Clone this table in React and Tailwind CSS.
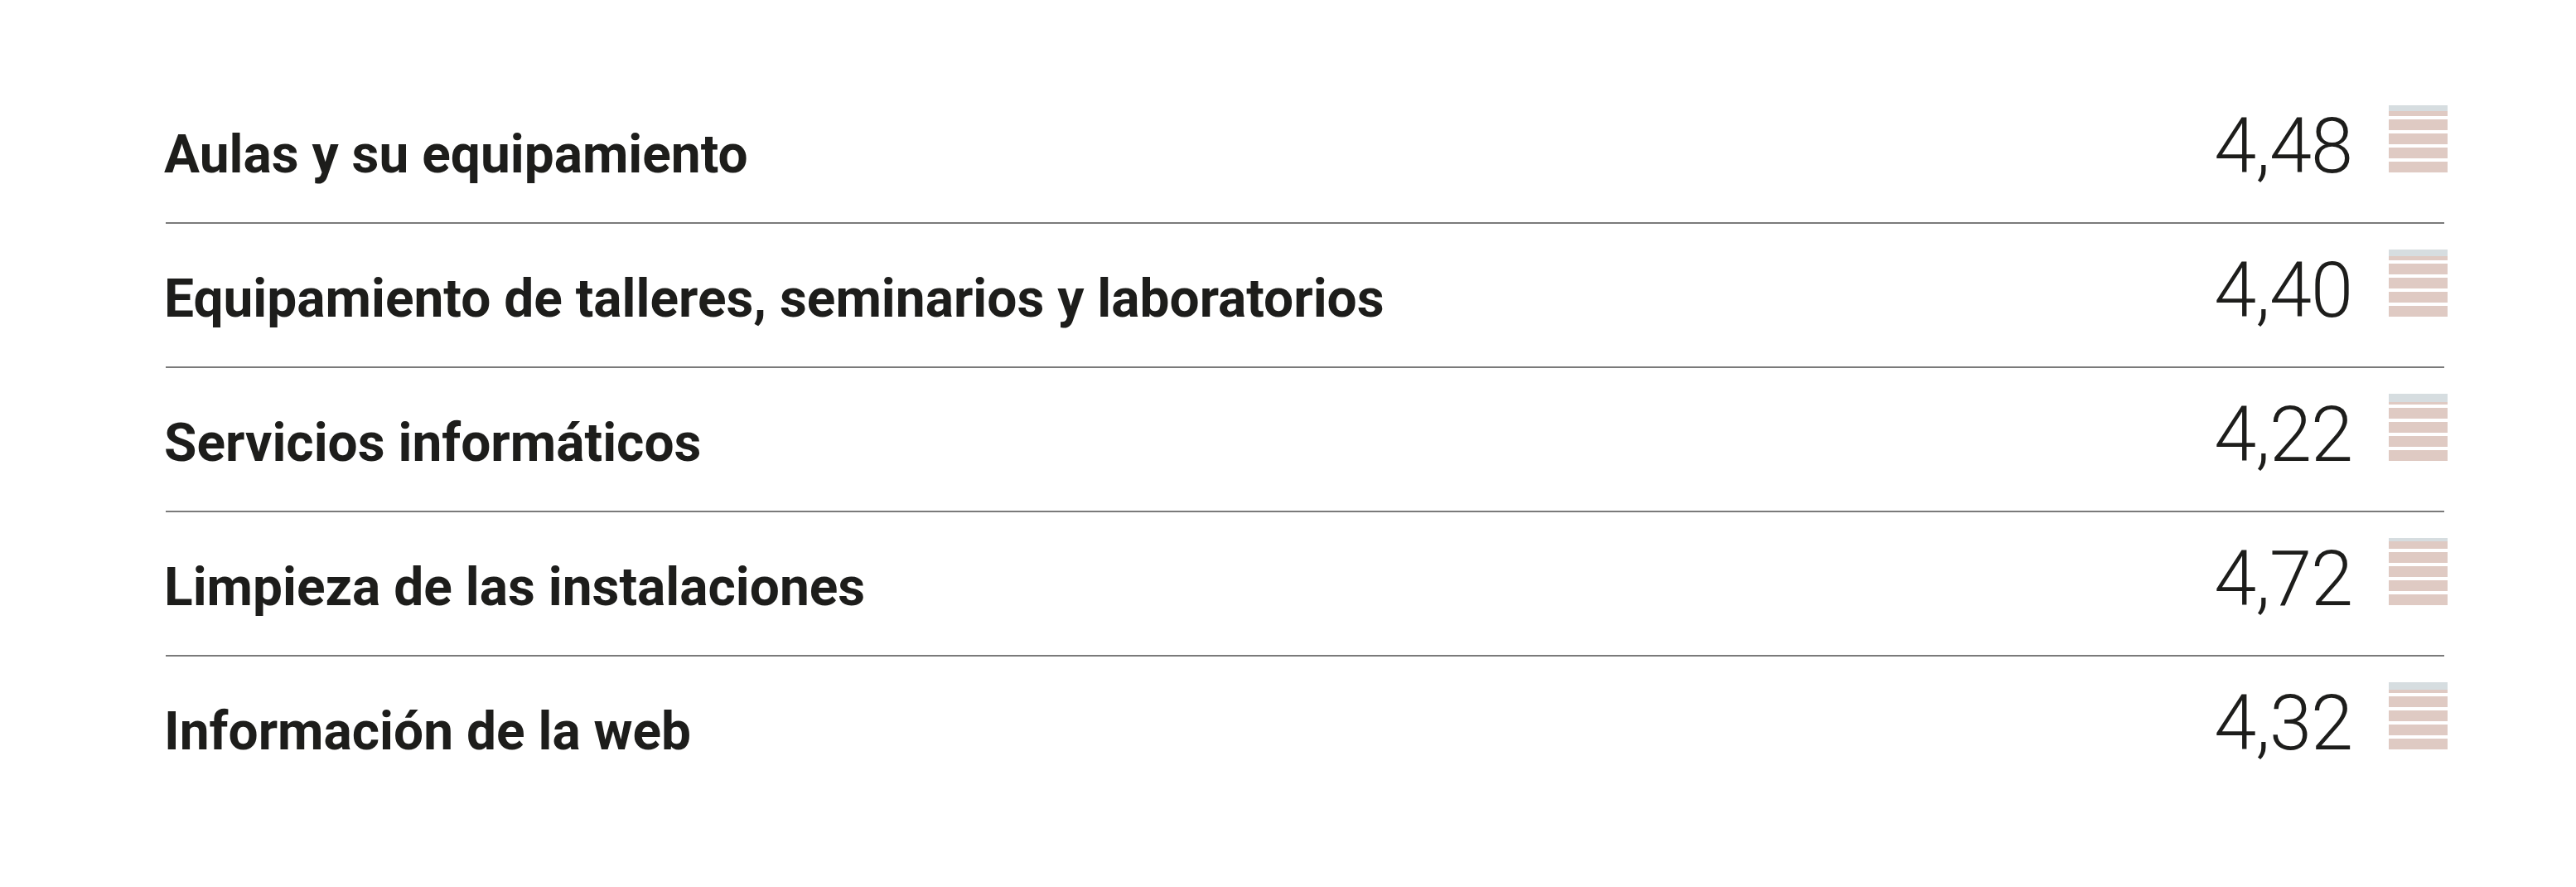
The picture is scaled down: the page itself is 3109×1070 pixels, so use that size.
const ROWS = [
  { label: 'Aulas y su equipamiento', value: 4.48 },
  { label: 'Equipamiento de talleres, seminarios y laboratorios', value: 4.4 },
  { label: 'Servicios informáticos', value: 4.22 },
  { label: 'Limpieza de las instalaciones', value: 4.72 },
  { label: 'Información de la web', value: 4.32 },
];

// top bar shows the decimal part, the four below are always full
function Bars({ value }) {
  const part = Math.max(0, Math.min(1, value - 4));
  return (
    <div className="ml-[44px] w-[71px] space-y-[4px]">
      <div className="relative h-[13px] bg-[#d6dde0]">
        <div className="absolute inset-x-0 bottom-0 bg-[#dfcac3]" style={{ height: `${part * 13}px` }} />
      </div>
      {[0, 1, 2, 3].map((i) => (
        <div key={i} className="h-[13px] bg-[#dfcac3]" />
      ))}
    </div>
  );
}

export default function App() {
  return (
    <div className="min-h-[1070px] w-[3109px] bg-white pt-[96px] font-['Roboto',_'Liberation_Sans',_sans-serif] text-[#1d1d1b]">
      <div className="ml-[198px] w-[2756px]">
        {ROWS.map((r, i) => (
          <div key={r.label}>
            <div className="flex items-baseline pt-[31px] pb-[45px]">
              <div className="flex-1 text-[64px] font-bold leading-none">{r.label}</div>
              <div className="text-[92px] font-light leading-none tracking-[-1px]">
                {r.value.toFixed(2).replace('.', ',')}
              </div>
              <Bars value={r.value} />
            </div>
            {i < ROWS.length - 1 && <div className="ml-[2px] h-[2px] w-[2750px] bg-[#7a7a7a]" />}
          </div>
        ))}
      </div>
    </div>
  );
}
